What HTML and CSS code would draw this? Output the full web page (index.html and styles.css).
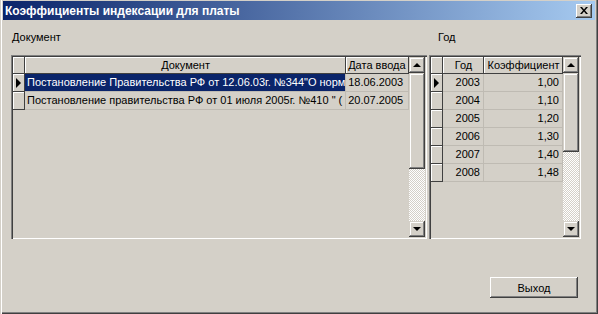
FILE: index.html
```html
<!DOCTYPE html>
<html lang="ru">
<head>
    <meta charset="UTF-8">
    <title>Коэффициенты индексации для платы</title>
    <link rel="stylesheet" href="styles.css">
</head>
<body>
<div class="window">
    <div class="titlebar">
        <span class="title">Коэффициенты индексации для платы</span>
        <button class="close" title="Закрыть">
            <svg width="8" height="7" viewBox="0 0 8 7">
                <path d="M0 0h2l2 2.5L6 0h2L5 3.5 8 7H6L4 4.5 2 7H0l3-3.5z" fill="#000"/>
            </svg>
        </button>
    </div>

    <div class="content">
        <div class="panels">
            <div class="panel panel-docs">
                <div class="caption">Документ</div>
                <div class="grid">
                    <div class="table">
                        <div class="row head">
                            <div class="ind"></div>
                            <div class="cell c-doc center">Документ</div>
                            <div class="cell c-date">Дата ввода</div>
                        </div>
                        <div class="row">
                            <div class="ind current"></div>
                            <div class="cell c-doc selected">Постановление Правительства РФ от 12.06.03г. №344"О норм</div>
                            <div class="cell c-date">18.06.2003</div>
                        </div>
                        <div class="row">
                            <div class="ind"></div>
                            <div class="cell c-doc">Постановление правительства РФ от 01 июля 2005г. №410 " (</div>
                            <div class="cell c-date">20.07.2005</div>
                        </div>
                    </div>
                    <div class="vscroll">
                        <div class="sbtn up"></div>
                        <div class="thumb thumb-docs"></div>
                        <div class="track"></div>
                        <div class="sbtn down"></div>
                    </div>
                </div>
            </div>

            <div class="panel panel-years">
                <div class="caption">Год</div>
                <div class="grid">
                    <div class="table">
                        <div class="row head">
                            <div class="ind"></div>
                            <div class="cell c-year center">Год</div>
                            <div class="cell c-coef center">Коэффициент</div>
                        </div>
                        <div class="row">
                            <div class="ind current"></div>
                            <div class="cell c-year num">2003</div>
                            <div class="cell c-coef num">1,00</div>
                        </div>
                        <div class="row">
                            <div class="ind"></div>
                            <div class="cell c-year num">2004</div>
                            <div class="cell c-coef num">1,10</div>
                        </div>
                        <div class="row">
                            <div class="ind"></div>
                            <div class="cell c-year num">2005</div>
                            <div class="cell c-coef num">1,20</div>
                        </div>
                        <div class="row">
                            <div class="ind"></div>
                            <div class="cell c-year num">2006</div>
                            <div class="cell c-coef num">1,30</div>
                        </div>
                        <div class="row">
                            <div class="ind"></div>
                            <div class="cell c-year num">2007</div>
                            <div class="cell c-coef num">1,40</div>
                        </div>
                        <div class="row">
                            <div class="ind"></div>
                            <div class="cell c-year num">2008</div>
                            <div class="cell c-coef num">1,48</div>
                        </div>
                    </div>
                    <div class="vscroll">
                        <div class="sbtn up"></div>
                        <div class="thumb thumb-years"></div>
                        <div class="track"></div>
                        <div class="sbtn down"></div>
                    </div>
                </div>
            </div>
        </div>

        <div class="footer">
            <button class="btn">Выход</button>
        </div>
    </div>
</div>
</body>
</html>
```

FILE: styles.css
```css
body {
    margin: 0;
    font-family: "Liberation Sans", Arial, sans-serif;
    font-size: 11px;
    color: #000;
    background: #d4d0c8;
}

.window {
    width: 598px;
    height: 314px;
    box-sizing: border-box;
    background: #d4d0c8;
    padding: 1px 3px 3px 3px;
    box-shadow: inset 1px 0 #d4d0c8, inset 2px 0 #fff,
                inset -1px -1px #404040, inset -2px -2px #808080;
    display: flex;
    flex-direction: column;
}

.titlebar {
    height: 19px;
    background: linear-gradient(to right, #0a246a, #a6caf0);
    display: flex;
    align-items: center;
    justify-content: space-between;
    padding: 0 3px 0 2px;
}

.title {
    color: #fff;
    font-weight: bold;
    font-size: 12px;
}

.close {
    width: 16px;
    height: 14px;
    padding: 0;
    border: none;
    background: #d4d0c8;
    display: flex;
    align-items: center;
    justify-content: center;
    box-shadow: inset -1px -1px #404040, inset 1px 1px #fff, inset -2px -2px #808080;
}

.content {
    flex: 1;
    padding: 11px 15px 0 8px;
    display: flex;
    flex-direction: column;
}

.panels {
    display: flex;
    gap: 1px;
}

.caption {
    height: 13px;
    line-height: 13px;
    margin-bottom: 11px;
}

.panel-docs { width: 416px; }
.panel-docs .caption { padding-left: 1px; }

.panel-years { width: 152px; margin-left: 1px; }
.panel-years .caption { padding-left: 9px; }

.grid {
    height: 184px;
    box-sizing: border-box;
    padding: 2px;
    display: flex;
    box-shadow: inset 1px 1px #808080, inset 2px 2px #404040,
                inset -1px -1px #fff, inset -2px -2px #d4d0c8;
}

.table {
    flex: 1;
    overflow: hidden;
}

.row {
    display: flex;
    height: 18px;
}

.row.head {
    height: 17px;
}

.ind {
    width: 12px;
    flex: none;
    box-sizing: border-box;
    position: relative;
    background: #d4d0c8;
    box-shadow: inset -1px -1px #404040, inset 1px 1px #fff;
}

.ind.current::after {
    content: "";
    position: absolute;
    left: 3px;
    top: 4px;
    border-left: 5px solid #000;
    border-top: 5px solid transparent;
    border-bottom: 5px solid transparent;
}

.cell {
    box-sizing: border-box;
    white-space: nowrap;
    overflow: hidden;
    padding: 0 2px;
    line-height: 17px;
    border-right: 1px solid #bfbbb3;
    border-bottom: 1px solid #bfbbb3;
}

.head .cell {
    line-height: 16px;
    border: none;
    box-shadow: inset -1px -1px #404040, inset 1px 1px #fff;
}

.center { text-align: center; }
.num { text-align: right; padding-right: 3px; }

.c-doc { width: 322px; }
.c-date { width: 63px; }
.c-year { width: 41px; }
.c-coef { width: 79px; }

.selected {
    background: #0a246a;
    color: #fff;
}

.vscroll {
    width: 16px;
    flex: none;
    display: flex;
    flex-direction: column;
}

.sbtn, .thumb {
    background: #d4d0c8;
    box-shadow: inset -1px -1px #404040, inset 1px 1px #d4d0c8,
                inset -2px -2px #808080, inset 2px 2px #fff;
}

.sbtn {
    height: 16px;
    flex: none;
    position: relative;
}

.sbtn::after {
    content: "";
    position: absolute;
    left: 4px;
    border-left: 4px solid transparent;
    border-right: 4px solid transparent;
}

.sbtn.up::after {
    top: 6px;
    border-bottom: 4px solid #000;
}

.sbtn.down::after {
    top: 6px;
    border-top: 4px solid #000;
}

.thumb-docs { height: 96px; }
.thumb-years { height: 79px; }

.track {
    flex: 1;
    background-color: #d4d0c8;
    background-image: repeating-conic-gradient(#fff 0 25%, #d4d0c8 0 50%);
    background-size: 2px 2px;
}

.footer {
    display: flex;
    justify-content: flex-end;
    margin-top: 38px;
}

.btn {
    width: 88px;
    height: 21px;
    margin-right: 2px;
    padding: 0;
    border: none;
    background: #d4d0c8;
    font-family: "Liberation Sans", Arial, sans-serif;
    font-size: 11px;
    color: #000;
    box-shadow: inset -1px -1px #404040, inset 1px 1px #fff, inset -2px -2px #808080;
}
```
